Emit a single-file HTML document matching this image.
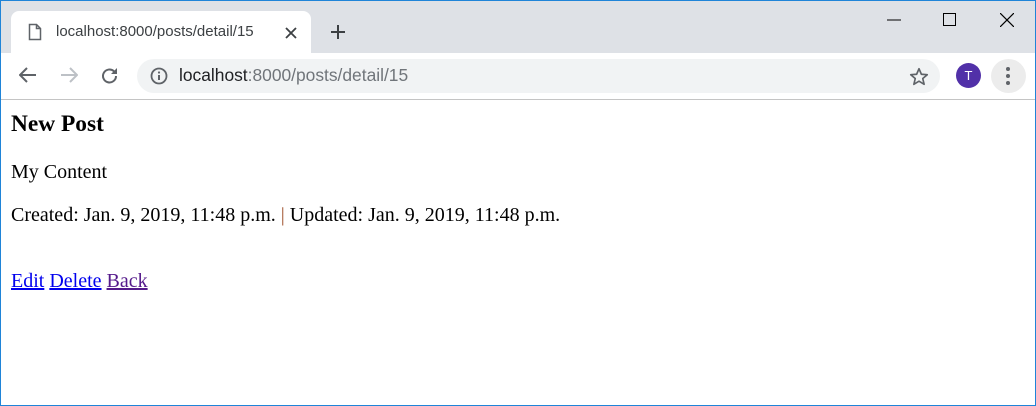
<!DOCTYPE html>
<html><head><style>
*{margin:0;padding:0;box-sizing:border-box}
body{width:1036px;height:406px;overflow:hidden;background:#fff;font-family:"Liberation Serif",serif;position:relative}
.frame{position:absolute;inset:0;border:1px solid #1f84d8;pointer-events:none;z-index:10}
.strip{position:absolute;left:0;top:0;width:1036px;height:53px;background:#dee1e6}
.tab{position:absolute;left:11px;top:11px;width:300px;height:42px;background:#fff;border-radius:8px 8px 0 0}
.tabt{position:absolute;left:56px;top:23px;font:15px "Liberation Sans",sans-serif;color:#3c4043}
.tool{position:absolute;left:0;top:53px;width:1036px;height:47px;background:#fff;border-bottom:1px solid #c4c4c4}
.omni{position:absolute;left:137px;top:59px;width:803px;height:34px;background:#f1f3f4;border-radius:17px}
.url{position:absolute;left:179px;top:65px;font:17.4px "Liberation Sans",sans-serif;color:#202124}
.url span{color:#70757a}
.a{position:absolute;font-family:"Liberation Serif",serif;font-size:20px;line-height:23px;white-space:nowrap;color:#000}
a{color:#0000ee}
svg{position:absolute}
</style></head><body>
<div class="strip"></div>
<div class="tab"></div>
<svg style="left:28px;top:23px" width="14" height="18" viewBox="0 0 14 18"><path d="M1.5 1.5h7l4 4v11h-11z M8.5 1.5v4h4" fill="none" stroke="#5f6368" stroke-width="1.5"/></svg>
<div class="tabt">localhost:8000/posts/detail/15</div>
<svg style="left:284px;top:26px" width="14" height="14"><path d="M2 2l10 10M12 2L2 12" stroke="#3c4043" stroke-width="1.8"/></svg>
<svg style="left:330px;top:24px" width="16" height="16"><path d="M8 1v14M1 8h14" stroke="#3c4043" stroke-width="2"/></svg>
<svg style="left:887px;top:19px" width="14" height="2"><path d="M0 1h14" stroke="#000" stroke-width="1"/></svg>
<svg style="left:943px;top:13px" width="14" height="14"><rect x="0.5" y="0.5" width="12" height="12" fill="none" stroke="#000"/></svg>
<svg style="left:1000px;top:13px" width="14" height="14"><path d="M0 0l14 14M14 0L0 14" stroke="#000" stroke-width="1.2"/></svg>
<div class="tool"></div>
<svg style="left:19px;top:67px" width="18" height="16"><path d="M17 8H2M8 1L1 8l7 7" fill="none" stroke="#5f6368" stroke-width="2"/></svg>
<svg style="left:60px;top:67px" width="18" height="16"><path d="M1 8h15M10 1l7 7-7 7" fill="none" stroke="#bdc1c6" stroke-width="2"/></svg>
<svg style="left:100px;top:66px" width="20" height="20"><path d="M16 10a6.5 6.5 0 1 1-2-4.7" fill="none" stroke="#5f6368" stroke-width="2"/><path d="M17 2v6h-6z" fill="#5f6368"/></svg>
<div class="omni"></div>
<svg style="left:150px;top:67px" width="18" height="18"><circle cx="9" cy="9" r="7.5" fill="none" stroke="#5f6368" stroke-width="1.8"/><path d="M9 8v5" stroke="#5f6368" stroke-width="2"/><circle cx="9" cy="5.5" r="1.1" fill="#5f6368"/></svg>
<div class="url">localhost<span>:8000/posts/detail/15</span></div>
<svg style="left:908px;top:66px" width="22" height="22" viewBox="0 0 24 24"><path d="M12 3l2.6 6 6.4.5-4.9 4.2 1.5 6.3L12 16.6 6.4 20l1.5-6.3L3 9.5l6.4-.5z" fill="none" stroke="#5f6368" stroke-width="1.8" stroke-linejoin="round"/></svg>
<div style="position:absolute;left:956px;top:63px;width:25px;height:25px;border-radius:50%;background:#5130a8;color:#fff;font:13px 'Liberation Sans',sans-serif;text-align:center;line-height:25px">T</div>
<div style="position:absolute;left:991px;top:59px;width:35px;height:34px;border-radius:50%;background:#ececec"></div>
<svg style="left:1005px;top:65px" width="6" height="22"><circle cx="3" cy="4" r="2" fill="#5f6368"/><circle cx="3" cy="11" r="2" fill="#5f6368"/><circle cx="3" cy="18" r="2" fill="#5f6368"/></svg>

<div class="a" style="left:11px;top:111px;font-weight:bold;font-size:23.4px;line-height:27px">New Post</div>
<div class="a" style="left:11px;top:161px">My Content</div>
<div class="a" style="left:11px;top:204px">Created: Jan. 9, 2019, 11:48 p.m. <span style="color:#a0522d">|</span> Updated: Jan. 9, 2019, 11:48 p.m.</div>
<div class="a" style="left:11px;top:270px"><a href="#">Edit</a> <a href="#">Delete</a> <a href="#" style="color:#551a8b">Back</a></div>
<div class="frame"></div>
</body></html>
